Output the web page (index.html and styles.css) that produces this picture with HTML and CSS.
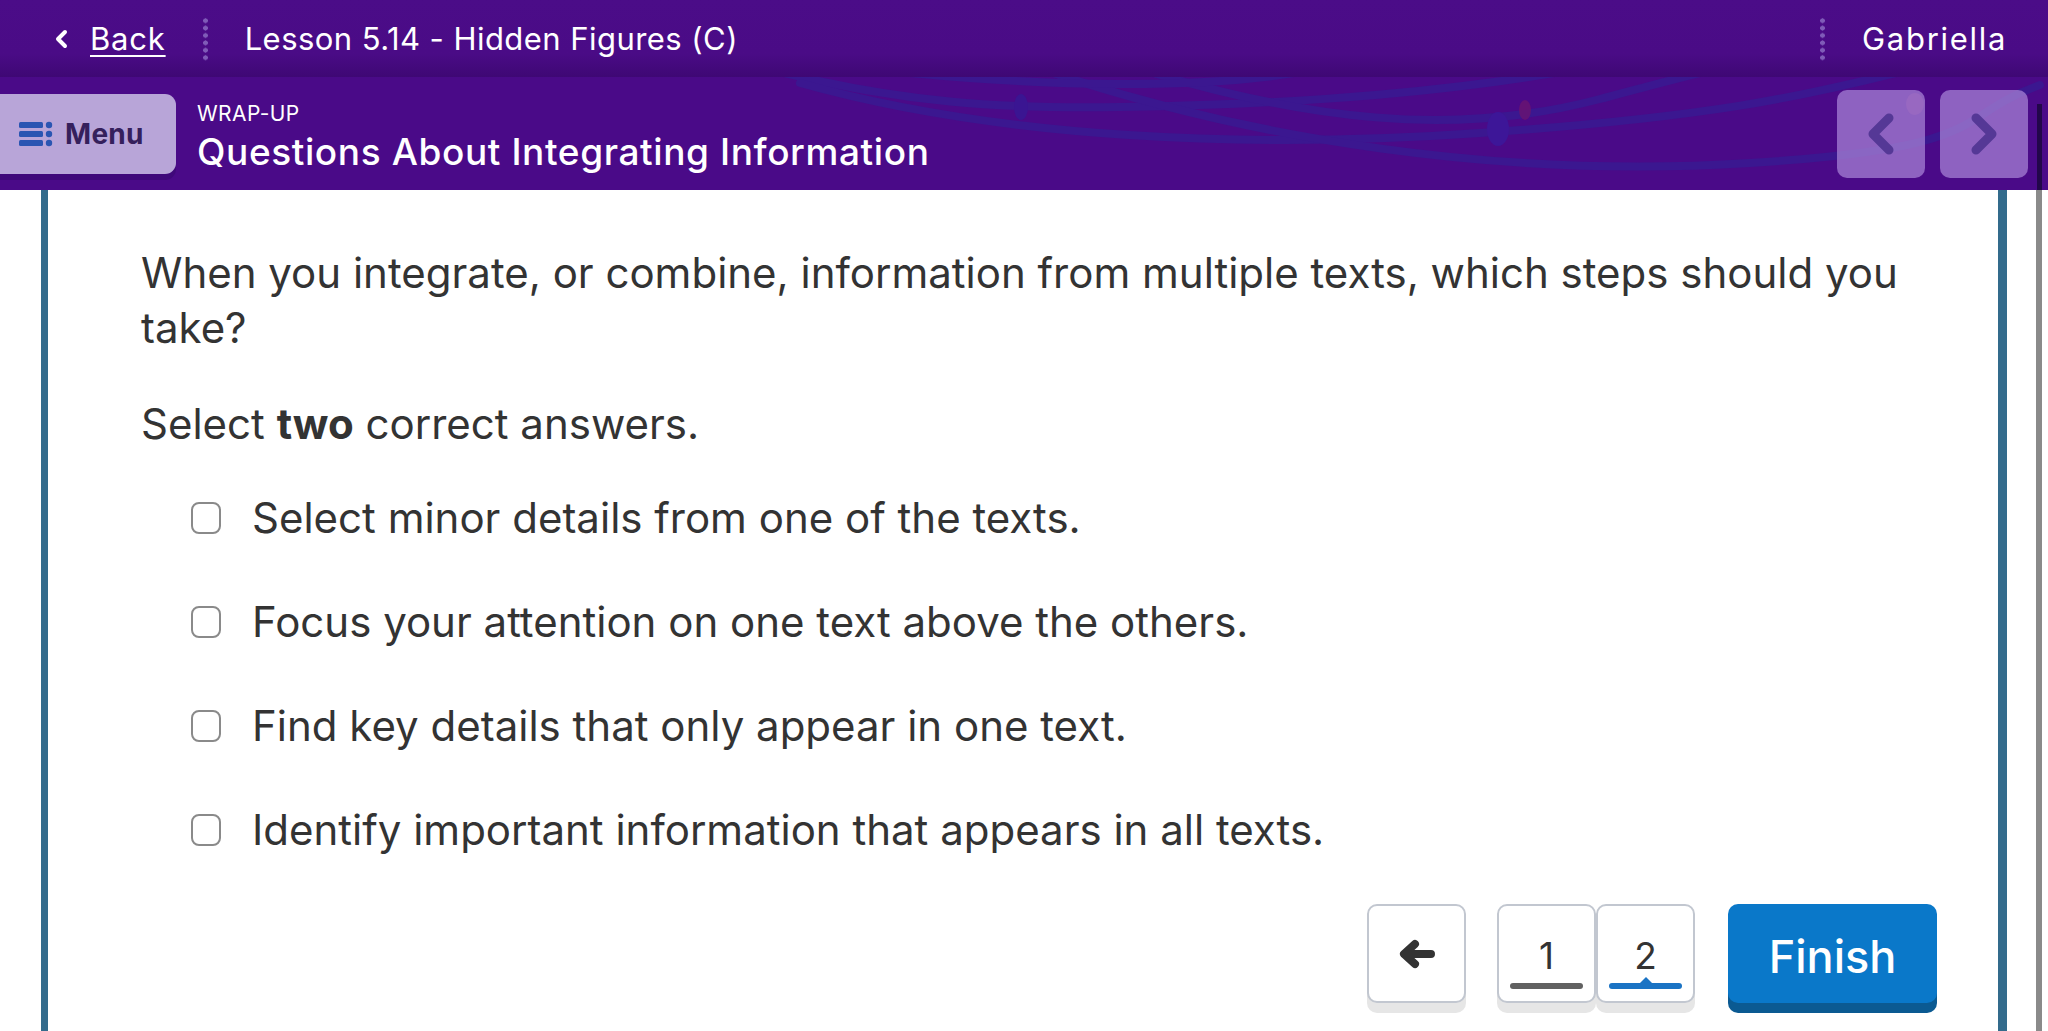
FILE: index.html
```html
<!DOCTYPE html>
<html lang="en">
<head>
<meta charset="utf-8">
<title>Lesson 5.14 - Hidden Figures (C)</title>
<link rel="stylesheet" href="styles.css">
</head>
<body>
<header class="topbar">
  <a class="back" href="#">
    <svg class="back-chev" width="14" height="20" viewBox="0 0 14 20"><path d="M11 3 L4 10 L11 17" fill="none" stroke="#fff" stroke-width="4" stroke-linecap="round" stroke-linejoin="round"/></svg>
    <span class="back-text">Back</span>
  </a>
  <span class="dots"></span>
  <span class="lesson">Lesson 5.14 - Hidden Figures (C)</span>
  <span class="spacer"></span>
  <span class="dots"></span>
  <span class="user">Gabriella</span>
</header>

<div class="subbar">
  <svg class="deco" width="2048" height="114" viewBox="0 0 2048 114" aria-hidden="true">
    <g fill="none" stroke="#3b1790" stroke-width="8" stroke-linecap="round">
      <path d="M780 -5 C 900 25, 1000 32, 1120 30 S 1400 22 1560 -5"/>
      <path d="M800 6 C 1000 62, 1250 72, 1480 56 S 1800 20 1900 -5"/>
      <path d="M1050 -5 C 1250 62, 1500 102, 1750 86 S 1950 40 2040 8"/>
      <path d="M1150 -5 C 1300 40, 1450 62, 1600 22 S 1700 -5 1760 -5"/>
      <path d="M900 -5 C 1050 10, 1200 12, 1300 -5"/>
    </g>
    <ellipse cx="1021" cy="30" rx="7" ry="13" fill="#3a1592"/>
    <ellipse cx="1498" cy="52" rx="11" ry="17" fill="#3d1698"/>
    <ellipse cx="1525" cy="33" rx="6" ry="10" fill="#6a1470" opacity="0.8"/>
    <ellipse cx="1915" cy="27" rx="9" ry="11" fill="#7a2a8a" opacity="0.6"/>
  </svg>
  <button class="menu-btn">
    <svg class="menu-icon" width="34" height="26" viewBox="0 0 34 26">
      <rect x="0" y="1" width="24" height="6" rx="1.5" fill="#2a55b2"/>
      <rect x="0" y="10" width="24" height="6" rx="1.5" fill="#2a55b2"/>
      <rect x="0" y="19" width="24" height="6" rx="1.5" fill="#2a55b2"/>
      <circle cx="30" cy="4" r="3.2" fill="#2a55b2"/>
      <circle cx="30" cy="13" r="3.2" fill="#2a55b2"/>
      <circle cx="30" cy="22" r="3.2" fill="#2a55b2"/>
    </svg>
    <span>Menu</span>
  </button>
  <div class="titles">
    <div class="kicker">WRAP-UP</div>
    <h1 class="title">Questions About Integrating Information</h1>
  </div>
  <div class="nav">
    <button class="nav-btn" aria-label="Previous">
      <svg width="32" height="44" viewBox="0 0 32 44"><path d="M24 6 L8 22 L24 38" fill="none" stroke="#553896" stroke-width="9" stroke-linecap="round" stroke-linejoin="round"/></svg>
    </button>
    <button class="nav-btn" aria-label="Next">
      <svg width="32" height="44" viewBox="0 0 32 44"><path d="M8 6 L24 22 L8 38" fill="none" stroke="#553896" stroke-width="9" stroke-linecap="round" stroke-linejoin="round"/></svg>
    </button>
  </div>
  <span class="sb-top"></span>
</div>

<div class="body">
  <main class="frame">
    <p class="question">When you integrate, or combine, information from multiple texts, which steps should you take?</p>
    <p class="instr">Select <b>two</b> correct answers.</p>
    <ul class="options">
      <li class="option"><span class="box"></span><span>Select minor details from one of the texts.</span></li>
      <li class="option"><span class="box"></span><span>Focus your attention on one text above the others.</span></li>
      <li class="option"><span class="box"></span><span>Find key details that only appear in one text.</span></li>
      <li class="option"><span class="box"></span><span>Identify important information that appears in all texts.</span></li>
    </ul>
    <div class="controls">
      <button class="key arrow-key" aria-label="Previous question">
        <svg width="40" height="32" viewBox="0 0 40 32"><path d="M34 16 H10 M18 6 L7 16 L18 26" fill="none" stroke="#333" stroke-width="8" stroke-linecap="round" stroke-linejoin="round"/></svg>
      </button>
      <div class="pages">
        <button class="key page"><span class="num">1</span><span class="bar"></span></button>
        <button class="key page current"><span class="num">2</span><span class="bar"></span></button>
      </div>
      <button class="finish">Finish</button>
    </div>
  </main>
  <div class="scrolltrack"></div>
</div>
</body>
</html>
```
FILE: styles.css
```css
* { box-sizing: border-box; }
html, body { margin: 0; padding: 0; }
body {
  width: 2048px;
  height: 1031px;
  overflow: hidden;
  background: #fff;
  font-family: "Inter", "Open Sans", sans-serif;
  color: #333;
}
button { font-family: inherit; }

.topbar {
  height: 77px;
  display: flex;
  align-items: center;
  background: linear-gradient(#4b0c88 0%, #4a0b86 70%, #3e0874 100%);
  color: #fff;
  padding-left: 54px;
  padding-right: 41px;
}
.back {
  display: flex;
  align-items: center;
  gap: 22px;
  color: #fff;
  text-decoration: none;
}
.back-chev { display: block; }
.back-text {
  font-size: 31px;
  text-decoration: underline;
  text-underline-offset: 5px;
  text-decoration-thickness: 2px;
  letter-spacing: 0.8px;
}
.dots {
  width: 5px;
  height: 44px;
  margin: 0 37px;
  background-image: radial-gradient(circle, #7f5bb8 2.2px, transparent 2.6px);
  background-size: 5px 7.4px;
  background-repeat: repeat-y;
}
.lesson { font-size: 31px; font-weight: 400; letter-spacing: 0.45px; }
.spacer { flex: 1; }
.user { font-size: 31px; letter-spacing: 1.7px; }

.subbar {
  position: relative;
  height: 113px;
  background: #4a0a88;
  display: flex;
  align-items: flex-start;
  overflow: hidden;
}
.deco { position: absolute; left: 0; top: 0; }
.menu-btn {
  position: relative;
  margin-top: 17px;
  width: 176px;
  height: 80px;
  border: 0;
  border-radius: 0 11px 11px 0;
  background: #b8a5d8;
  box-shadow: 0 6px 0 #3f087a;
  display: flex;
  align-items: center;
  gap: 12px;
  padding-left: 19px;
  color: #35205c;
  font-size: 28px;
  font-weight: 700;
  letter-spacing: 0.3px;
}
.menu-icon { display: block; }
.titles {
  position: relative;
  margin-left: 21px;
  margin-top: 25px;
  color: #fff;
}
.kicker {
  font-size: 21px;
  line-height: 24px;
  letter-spacing: 0.4px;
  font-weight: 400;
}
.title {
  margin: 4px 0 0;
  font-size: 37px;
  line-height: 44px;
  font-weight: 500;
  letter-spacing: 0.6px;
}
.nav {
  position: relative;
  margin-left: auto;
  margin-top: 13px;
  margin-right: 20px;
  display: flex;
  gap: 15px;
}
.nav-btn {
  width: 88px;
  height: 88px;
  border: 0;
  border-radius: 10px;
  background: rgba(176, 140, 220, 0.68);
  display: flex;
  align-items: center;
  justify-content: center;
  padding: 0;
}
.nav-btn svg { display: block; }
.sb-top {
  position: absolute;
  right: 6px;
  top: 27px;
  width: 5px;
  bottom: 0;
  background: #22074a;
}

.body {
  display: flex;
  height: 841px;
}
.frame {
  margin-left: 41px;
  width: 1966px;
  border-left: 7px solid #336b8c;
  border-right: 9px solid #336b8c;
  padding: 55px 61px 0 93px;
  display: flex;
  flex-direction: column;
}
.question {
  margin: 0;
  font-size: 42px;
  line-height: 55px;
  color: #333;
}
.instr {
  margin: 41px 0 0;
  font-size: 42px;
  line-height: 55px;
  color: #333;
}
.instr b { font-weight: 700; }
.options {
  list-style: none;
  margin: 39px 0 0;
  padding: 0 0 0 50px;
  display: flex;
  flex-direction: column;
  gap: 49px;
}
.option {
  display: flex;
  align-items: center;
  gap: 31px;
  font-size: 42px;
  line-height: 55px;
  color: #333;
}
.box {
  width: 30px;
  height: 32px;
  border: 2.5px solid #8a8a8a;
  border-radius: 8px;
  flex: none;
}
.controls {
  margin-top: 47px;
  display: flex;
  justify-content: flex-end;
  align-items: flex-start;
}
.key {
  width: 99px;
  height: 99px;
  border: 2px solid #c2c7d0;
  border-radius: 10px;
  background: #fff;
  box-shadow: 0 10px 0 #e6e6e6;
  padding: 0;
}
.arrow-key {
  display: flex;
  align-items: center;
  justify-content: center;
}
.arrow-key svg { display: block; }
.pages {
  display: flex;
  margin-left: 31px;
}
.page {
  position: relative;
  display: flex;
  flex-direction: column;
  align-items: center;
  justify-content: flex-start;
  padding-top: 30px;
}
.num {
  font-size: 37px;
  line-height: 40px;
  color: #333;
}
.bar {
  position: absolute;
  left: 11px;
  right: 11px;
  bottom: 12px;
  height: 6px;
  border-radius: 3px;
  background: #616161;
}
.current .bar { background: #1a73c4; }
.current .bar::before {
  content: "";
  position: absolute;
  left: 50%;
  top: -6px;
  margin-left: -7px;
  border-left: 7px solid transparent;
  border-right: 7px solid transparent;
  border-bottom: 7px solid #1a73c4;
}
.finish {
  margin-left: 33px;
  width: 209px;
  height: 99px;
  border: 0;
  border-radius: 10px;
  background: #0a78c9;
  box-shadow: 0 10px 0 #0b5a92;
  color: #fff;
  font-size: 45px;
  font-weight: 500;
  padding: 6px 0 0;
}
.scrolltrack {
  margin-left: 29px;
  width: 6px;
  background: #8a8a8a;
}
```
